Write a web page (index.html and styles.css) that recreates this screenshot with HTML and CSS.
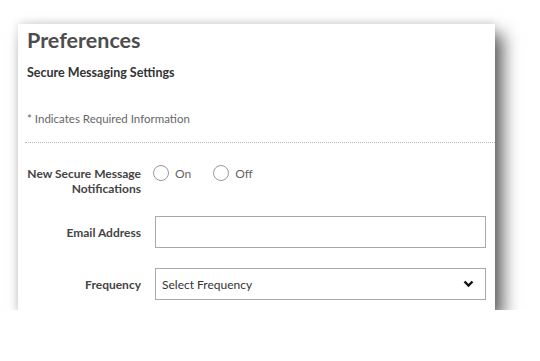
FILE: index.html
```html
<!DOCTYPE html>
<html lang="en">
<head>
  <meta charset="UTF-8">
  <title>Preferences</title>
  <link rel="stylesheet" href="styles.css">
</head>
<body>
  <div class="card">
    <h1>Preferences</h1>
    <h2>Secure Messaging Settings</h2>
    <p class="required">* Indicates Required Information</p>
    <div class="divider"></div>

    <form class="prefs">
      <label class="label two-line">New Secure Message<br>Notifications</label>
      <div class="radios">
        <label class="radio"><span class="circle"></span>On</label>
        <label class="radio"><span class="circle"></span>Off</label>
      </div>

      <label class="label" for="email">Email Address</label>
      <input type="text" id="email" class="field">

      <label class="label" for="freq">Frequency</label>
      <div class="field select">
        <span>Select Frequency</span>
        <svg width="11" height="8" viewBox="0 0 11 8">
          <path d="M1.5 1.5 L5.5 5.5 L9.5 1.5" fill="none" stroke="#111" stroke-width="2.4"/>
        </svg>
      </div>
    </form>
  </div>
</body>
</html>
```

FILE: styles.css
```css
body {
  margin: 0;
  background: #fff;
  font-family: Lato, 'Open Sans', sans-serif;
}
.card {
  margin: 24px 0 0 18px;
  width: 477px;
  height: 286px;
  box-sizing: border-box;
  padding: 0 9px;
  background: #fff;
  box-shadow: 8px 10px 16px rgba(0,0,0,0.62), 0 -2px 8px rgba(0,0,0,0.1);
}
h1 {
  margin: 0;
  padding-top: 3px;
  font-size: 21.5px;
  line-height: 26px;
  font-weight: 700;
  color: #4d4d4d;
}
h2 {
  margin: 12px 0 0;
  font-size: 12.5px;
  line-height: 15px;
  font-weight: 700;
  color: #333;
}
.required {
  margin: 31px 0 0;
  font-size: 11.5px;
  line-height: 15px;
  color: #666;
}
.divider {
  margin: 16px -9px 0 -2px;
  border-top: 1px dotted #bbb;
}
.prefs {
  display: grid;
  grid-template-columns: 114px 1fr;
  column-gap: 14px;
  row-gap: 20px;
  margin-top: 23px;
  align-items: center;
}
.label {
  text-align: right;
  font-size: 12px;
  line-height: 15px;
  font-weight: 700;
  color: #444;
  white-space: nowrap;
}
.two-line {
  align-self: start;
}
.radios {
  align-self: start;
  display: flex;
  gap: 22px;
  margin-left: -2px;
  margin-top: -1px;
}
.radio {
  display: flex;
  align-items: center;
  gap: 6px;
  font-size: 12px;
  color: #666;
}
.circle {
  width: 14px;
  height: 14px;
  border: 1px solid #999;
  border-radius: 50%;
}
.field {
  height: 32px;
  box-sizing: border-box;
  border: 1px solid #aaa;
  background: #fff;
  margin: 0;
}
.select {
  display: flex;
  align-items: center;
  justify-content: space-between;
  padding: 0 11px 0 6px;
  font-size: 12px;
  color: #333;
}
```
